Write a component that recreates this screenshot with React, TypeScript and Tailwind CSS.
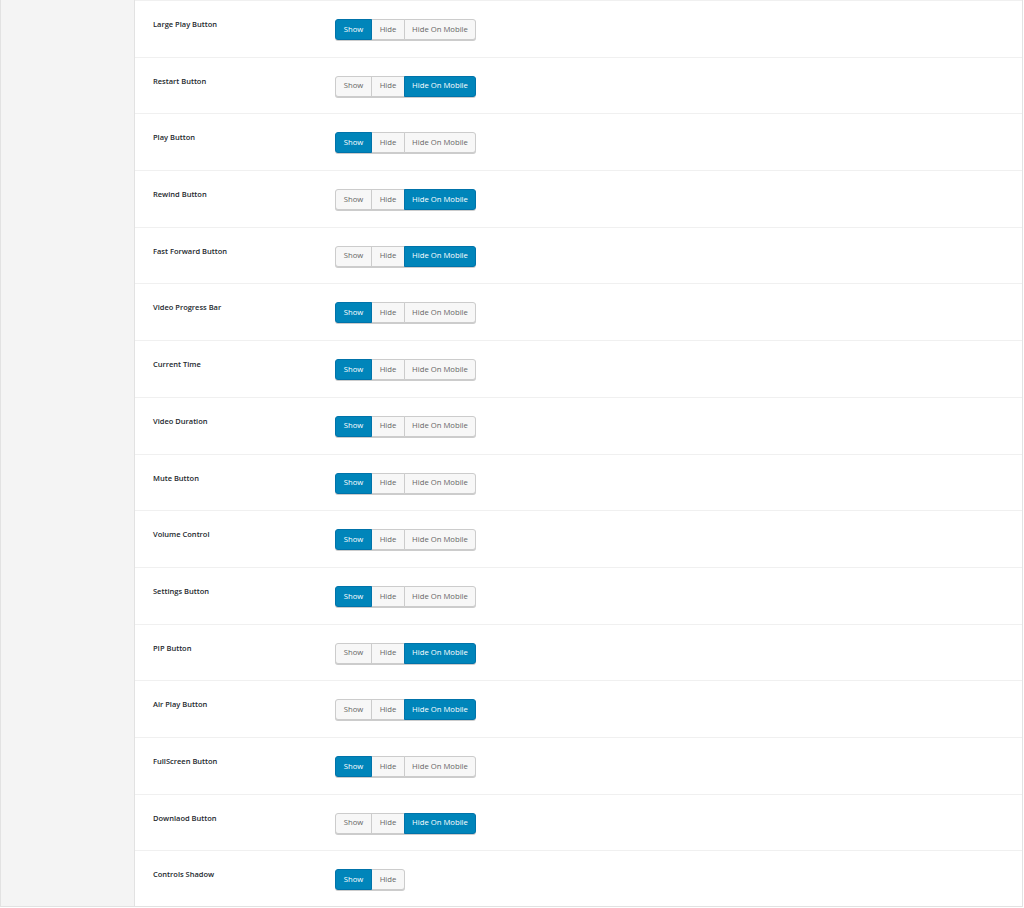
import React from "react";

type Opt = "Show" | "Hide" | "Hide On Mobile";

const rows: { label: string; active: Opt; mobile: boolean }[] = [
  { label: "Large Play Button", active: "Show", mobile: true },
  { label: "Restart Button", active: "Hide On Mobile", mobile: true },
  { label: "Play Button", active: "Show", mobile: true },
  { label: "Rewind Button", active: "Hide On Mobile", mobile: true },
  { label: "Fast Forward Button", active: "Hide On Mobile", mobile: true },
  { label: "Video Progress Bar", active: "Show", mobile: true },
  { label: "Current Time", active: "Show", mobile: true },
  { label: "Video Duration", active: "Show", mobile: true },
  { label: "Mute Button", active: "Show", mobile: true },
  { label: "Volume Control", active: "Show", mobile: true },
  { label: "Settings Button", active: "Show", mobile: true },
  { label: "PIP Button", active: "Hide On Mobile", mobile: true },
  { label: "Air Play Button", active: "Hide On Mobile", mobile: true },
  { label: "FullScreen Button", active: "Show", mobile: true },
  { label: "Downlaod Button", active: "Hide On Mobile", mobile: true },
  { label: "Controls Shadow", active: "Show", mobile: false },
];

function Btn({ text, active, first, last, w }: { text: Opt; active: boolean; first: boolean; last: boolean; w: string }) {
  const base =
    "h-[21px] flex items-center justify-center text-[7.7px] leading-none border shadow-[0_1px_0_#cccccc] " +
    w +
    (first ? " rounded-l-[3px]" : " -ml-px") +
    (last ? " rounded-r-[3px]" : "");
  const color = active
    ? " bg-[#0085ba] border-[#0073aa] text-white relative z-10"
    : " bg-[#f7f7f7] border-[#cccccc] text-[#666666]";
  return <div className={base + color}>{text}</div>;
}

export default function App() {
  return (
    <div className="w-[1024px] h-[908px] bg-white" style={{ fontFamily: '"Open Sans", "Liberation Sans", sans-serif' }}>
      <div className="w-[1023px] h-[907px] flex border-l border-r border-b border-[#e2e2e2] overflow-hidden">
        <div className="w-[134px] shrink-0 bg-[#f4f4f4] border-r border-[#e2e2e2]" />
        <div className="flex-1 flex flex-col border-t border-[#f0f0f0]">
          {rows.map((r, i) => {
            const opts: Opt[] = r.mobile ? ["Show", "Hide", "Hide On Mobile"] : ["Show", "Hide"];
            const widths = ["w-[37px]", "w-[34px]", "w-[72px]"];
            return (
              <div
                key={r.label}
                className={
                  "h-[56.69px] shrink-0 flex pl-[18px] pt-[18px] " +
                  (i < rows.length - 1 ? "border-b border-[#f0f0f0]" : "")
                }
              >
                <div className="w-[182px] shrink-0 text-[7.5px] leading-[12px] font-semibold text-[#23282d] -mt-px">
                  {r.label}
                </div>
                <div className="flex">
                  {opts.map((o, j) => (
                    <Btn
                      key={o}
                      text={o}
                      active={o === r.active}
                      first={j === 0}
                      last={j === opts.length - 1}
                      w={widths[j]}
                    />
                  ))}
                </div>
              </div>
            );
          })}
        </div>
      </div>
    </div>
  );
}
